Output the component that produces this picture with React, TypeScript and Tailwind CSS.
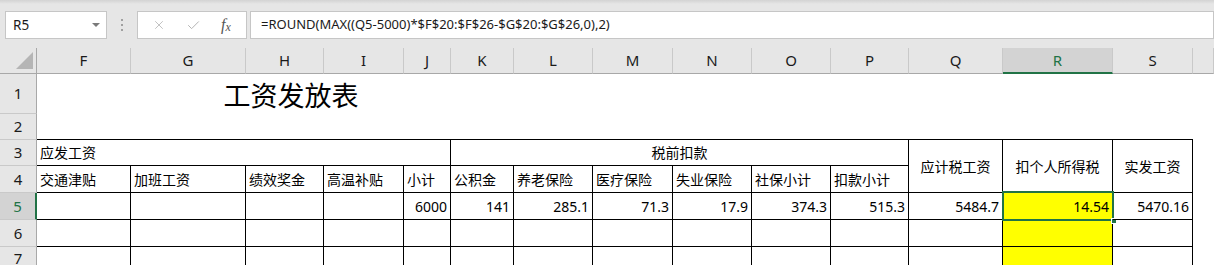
import React from "react";
import { X, Check } from "lucide-react";

const FONT = "font-['Noto_Sans','Noto_Sans_CJK_SC',sans-serif]";

const cols = ["F", "G", "H", "I", "J", "K", "L", "M", "N", "O", "P", "Q", "R", "S", ""];

function ColHeader({ label }: { label: string }) {
  const sel = label === "R";
  return (
    <div
      className={
        "flex items-center justify-center text-[15px] border-r border-[#c9c9c9] " +
        (sel
          ? "bg-[#d3d3d3] text-[#217346] border-b-2 border-b-[#217346]"
          : "bg-[#e6e6e6] text-[#1a1a1a] border-b border-b-[#a8a8a8]")
      }
    >
      {label}
    </div>
  );
}

function RowHeader({ n }: { n: number }) {
  const sel = n === 5;
  return (
    <div
      className={
        "flex items-center justify-center text-[15px] border-b border-[#c9c9c9] " +
        (sel
          ? "bg-[#d3d3d3] text-[#217346] border-r-2 border-r-[#217346]"
          : "bg-[#e6e6e6] text-[#1a1a1a] border-r border-r-[#a8a8a8]")
      }
    >
      {n}
    </div>
  );
}

const row4 = ["交通津贴", "加班工资", "绩效奖金", "高温补贴", "小计", "公积金", "养老保险", "医疗保险", "失业保险", "社保小计", "扣款小计"];
const row5 = ["", "", "", "", "6000", "141", "285.1", "71.3", "17.9", "374.3", "515.3", "5484.7", "14.54", "5470.16"];

export default function App() {
  return (
    <div className={"w-[1214px] h-[265px] overflow-hidden bg-white flex flex-col " + FONT}>
      {/* Formula bar */}
      <div className="h-[48px] shrink-0 bg-[linear-gradient(to_bottom,#d3d3d3_0px,#e6e6e6_4px,#e6e6e6_100%)] flex items-start pt-[11px] pl-[5px]">
        <div className="w-[102px] h-[28px] bg-white border border-[#c6c6c6] flex items-center justify-between pl-[7px] pr-[6px] text-[13.5px] text-[#1a1a1a]">
          <span>R5</span>
          <span className="w-0 h-0 border-l-[4px] border-r-[4px] border-t-[4px] border-l-transparent border-r-transparent border-t-[#7a7a7a]" />
        </div>
        <div className="w-[30px] h-[28px] flex flex-col items-center justify-center gap-[3px]">
          <span className="w-[2px] h-[2px] bg-[#a0a0a0]" />
          <span className="w-[2px] h-[2px] bg-[#a0a0a0]" />
          <span className="w-[2px] h-[2px] bg-[#a0a0a0]" />
        </div>
        <div className="w-[110px] h-[28px] bg-white border border-[#c6c6c6] flex items-center">
          <div className="w-[40px] flex justify-center pl-[2px]">
            <X size={14} strokeWidth={1.4} color="#b4b4b4" />
          </div>
          <div className="w-[30px] flex justify-center">
            <Check size={15} strokeWidth={1.6} color="#b4b4b4" />
          </div>
          <div className="w-[36px] flex justify-center font-['Liberation_Serif',serif] italic text-[#555] text-[16px] leading-none">
            <span>f</span>
            <span className="text-[12px] mt-[4px]">x</span>
          </div>
        </div>
        <div className="flex-1 ml-[3px] h-[28px] bg-white border border-[#c6c6c6] flex items-center pl-[10px] text-[13px] text-[#1a1a1a] whitespace-nowrap">
          =ROUND(MAX((Q5-5000)*$F$20:$F$26-$G$20:$G$26,0),2)
        </div>
      </div>

      {/* Sheet grid */}
      <div className="flex-1 grid grid-cols-[37px_94px_115px_78px_80px_47px_63px_79px_80px_79px_79px_78px_94px_110px_80px_1fr] grid-rows-[26px_40px_26px_26px_27px_27px_27px_1fr] text-[14px] text-black">
        {/* header row */}
        <div className="bg-[#e6e6e6] border-r border-b border-[#a8a8a8] relative">
          <svg className="absolute left-[16px] top-[4px]" width="17" height="17" viewBox="0 0 17 17">
            <polygon points="17,0 17,17 0,17" fill="#b5b5b5" />
          </svg>
        </div>
        {cols.map((c, i) => (
          <ColHeader key={"h" + i} label={c} />
        ))}

        {/* row 1 */}
        <RowHeader n={1} />
        <div />
        <div className="col-span-4 flex items-end justify-center pb-[5px] text-[27px] leading-none">
          工资发放表
        </div>
        <div className="col-span-10" />

        {/* row 2 */}
        <RowHeader n={2} />
        <div className="col-span-14 border-b border-black" />
        <div />

        {/* row 3 */}
        <RowHeader n={3} />
        <div className="col-span-5 border-r border-b border-black flex items-center pl-[3px]">应发工资</div>
        <div className="col-span-6 border-r border-b border-black flex items-center justify-center">税前扣款</div>
        <div className="row-span-2 border-r border-b border-black flex items-center justify-center">应计税工资</div>
        <div className="row-span-2 border-r border-b border-black flex items-center justify-center">扣个人所得税</div>
        <div className="row-span-2 border-r border-b border-black flex items-center justify-center">实发工资</div>
        <div />

        {/* row 4 */}
        <RowHeader n={4} />
        {row4.map((t, i) => (
          <div key={"r4" + i} className="border-r border-b border-black flex items-center pl-[3px] whitespace-nowrap overflow-hidden">
            {t}
          </div>
        ))}
        <div />

        {/* row 5 */}
        <RowHeader n={5} />
        {row5.map((t, i) => {
          const isR = i === 12;
          return (
            <div
              key={"r5" + i}
              className={
                "border-r border-b border-black flex items-center justify-end pr-[3px] relative " +
                (isR ? "bg-[#ffff00]" : "")
              }
            >
              {t}
              {isR && (
                <>
                  <div className="absolute left-[-1px] top-[-2px] right-[-2px] bottom-[-2px] border-2 border-[#217346]" />
                  <div className="absolute right-[-5px] bottom-[-5px] w-[6px] h-[6px] bg-[#217346] border border-white" />
                </>
              )}
            </div>
          );
        })}
        <div />

        {/* row 6 */}
        <RowHeader n={6} />
        {row5.map((_, i) => (
          <div key={"r6" + i} className={"border-r border-b border-black " + (i === 12 ? "bg-[#ffff00]" : "")} />
        ))}
        <div />

        {/* row 7 */}
        <RowHeader n={7} />
        {row5.map((_, i) => (
          <div key={"r7" + i} className={"border-r border-black " + (i === 12 ? "bg-[#ffff00]" : "")} />
        ))}
        <div />
      </div>
    </div>
  );
}
